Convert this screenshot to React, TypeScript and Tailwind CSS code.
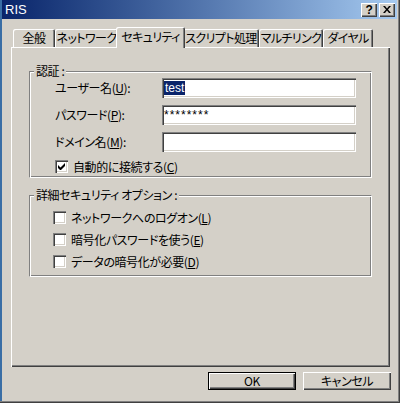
import type { ReactNode } from "react";

const raised = "shadow-[inset_1px_1px_#ffffff,inset_-1px_-1px_#404040,inset_-2px_-2px_#808080]";
const sunken =
  "shadow-[inset_1px_1px_#808080,inset_2px_2px_#404040,inset_-1px_-1px_#ffffff,inset_-2px_-2px_#d4d0c8]";

function Key({ k }: { k: string }) {
  return (
    <>
      (<span className="underline underline-offset-1">{k}</span>)
    </>
  );
}

function Tab({ label, w, active = false }: { label: string; w: string; active?: boolean }) {
  if (active) {
    return (
      <div
        className={`${w} -mx-[2px] -mb-px h-[21px] relative z-10 flex items-center justify-center whitespace-nowrap tracking-[-0.6px] bg-[#d4d0c8] pb-[2px] rounded-tl-[2px] rounded-tr-[2px] shadow-[inset_1px_1px_#ffffff,inset_-1px_0_#404040,inset_-2px_0_#808080]`}
      >
        {label}
      </div>
    );
  }
  return (
    <div
      className={`${w} h-[18px] flex items-center justify-center whitespace-nowrap tracking-[-0.6px] bg-[#d4d0c8] rounded-tl-[2px] rounded-tr-[2px] shadow-[inset_1px_1px_#ffffff,inset_-1px_0_#404040,inset_-2px_0_#808080]`}
    >
      {label}
    </div>
  );
}

function Group({ title, className, children }: { title: string; className: string; children: ReactNode }) {
  return (
    <div
      className={`relative ml-[18px] w-[343px] border border-t-[#808080] border-l-[#808080] border-r-white border-b-white shadow-[inset_1px_1px_#ffffff,inset_-1px_-1px_#808080] ${className}`}
    >
      <span className="absolute -top-[8px] left-[4px] bg-[#d4d0c8] px-[2px] leading-[14px]">{title}</span>
      {children}
    </div>
  );
}

function Check({ checked = false, children }: { checked?: boolean; children: ReactNode }) {
  return (
    <div className="flex items-center h-[13px] gap-[5px]">
      <div className={`w-[13px] h-[13px] bg-white flex items-center justify-center ${sunken}`}>
        {checked && (
          <svg width="7" height="7" viewBox="0 0 7 7">
            <path d="M0 2v3l2 2h1l4-4V0L2.5 4.5z" fill="#000" />
          </svg>
        )}
      </div>
      <span className="leading-[13px]">{children}</span>
    </div>
  );
}

function Field({ label, children }: { label: ReactNode; children?: ReactNode }) {
  return (
    <div className="flex items-center h-[20px]">
      <div className="w-[107px]">{label}</div>
      <div className={`w-[194px] h-[20px] bg-white flex items-center pl-[2px] font-['Liberation_Sans',sans-serif] tracking-normal text-[12px] ${sunken}`}>
        {children}
      </div>
    </div>
  );
}

export default function App() {
  return (
    <div className="relative w-[400px] h-[403px] overflow-hidden bg-[#d4d0c8] text-[12px] tracking-[-0.4px] text-black font-['Noto_Sans_CJK_JP',sans-serif] [font-feature-settings:'palt'] leading-none shadow-[inset_-1px_-1px_#404040,inset_-2px_-2px_#808080,inset_2px_0_#3a6ea5]">
      {/* title bar */}
      <div className="ml-[2px] mr-[3px] h-[19px] flex items-center justify-between bg-linear-to-r from-[#0a246a] to-[#a6caf0]">
        <span className="pl-[3px] text-white font-['Liberation_Sans',sans-serif] tracking-normal text-[13px]">RIS</span>
        <div className="flex gap-[2px] pr-[2px]">
          <div className={`w-[16px] h-[14px] bg-[#d4d0c8] flex items-center justify-center font-['Liberation_Sans',sans-serif] font-bold text-[12px] ${raised}`}>
            ?
          </div>
          <div className={`w-[16px] h-[14px] bg-[#d4d0c8] flex items-center justify-center ${raised}`}>
            <svg width="8" height="7" viewBox="0 0 8 7">
              <path d="M0 0h2l2 2.5L6 0h2L5 3.5 8 7H6L4 4.5 2 7H0l3-3.5z" fill="#000" />
            </svg>
          </div>
        </div>
      </div>

      {/* tabs */}
      <div className="mt-[8px] h-[20px] pl-[13px] flex items-end relative z-10">
        <Tab label="全般" w="w-[42px]" />
        <Tab label="ネットワーク" w="w-[63px]" />
        <Tab label="セキュリティ" w="w-[69px]" active />
        <Tab label="スクリプト処理" w="w-[76px]" />
        <Tab label="マルチリンク" w="w-[64px]" />
        <Tab label="ダイヤル" w="w-[50px]" />
      </div>

      {/* panel */}
      <div className={`ml-[11px] w-[379px] h-[320px] pt-[24px] ${raised}`}>
        <Group title="認証 :" className="h-[107px] pt-[6px] pl-[25px]">
          <div className="flex flex-col gap-[7px]">
            <Field label={<>ユーザー名<Key k="U" />:</>}>
              <span className="bg-[#0a246a] text-white px-[1px] leading-[14px]">test</span>
            </Field>
            <Field label={<>パスワード<Key k="P" />:</>}>
              <span className="tracking-[1px]">********</span>
            </Field>
            <Field label={<>ドメイン名<Key k="M" />:</>} />
          </div>
          <div className="mt-[8px]">
            <Check checked>
              自動的に接続する<Key k="C" />
            </Check>
          </div>
        </Group>

        <Group title="詳細セキュリティ オプション :" className="mt-[17px] h-[82px] pt-[15px] pl-[23px]">
          <div className="flex flex-col gap-[9px]">
            <Check>
              ネットワークへのログオン<Key k="L" />
            </Check>
            <Check>
              暗号化パスワードを使う<Key k="E" />
            </Check>
            <Check>
              データの暗号化が必要<Key k="D" />
            </Check>
          </div>
        </Group>
      </div>

      {/* buttons */}
      <div className="mt-[5px] flex pl-[208px] gap-[7px]">
        <button className={`w-[88px] h-[18px] border border-black flex items-center justify-center ${raised}`}>
          OK
        </button>
        <button className={`w-[88px] h-[18px] flex items-center justify-center ${raised}`}>キャンセル</button>
      </div>
    </div>
  );
}
